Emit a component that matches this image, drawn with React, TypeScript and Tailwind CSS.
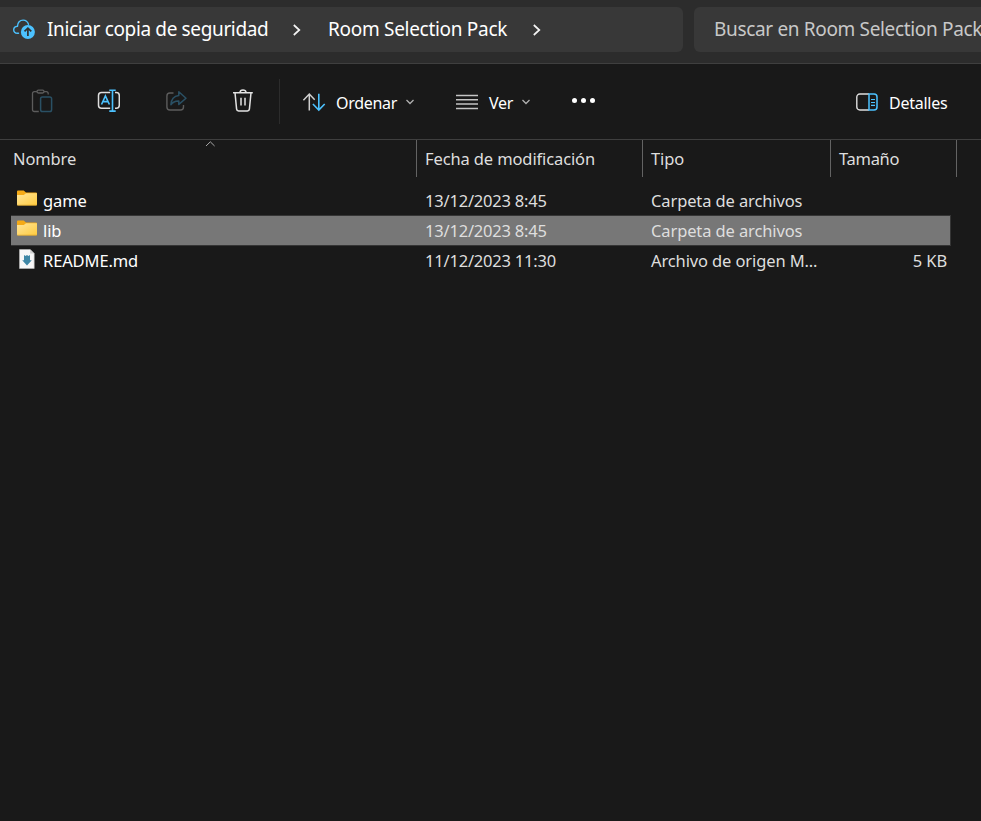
import type { ReactNode } from "react";

function CloudIcon() {
  return (
    <svg width="24" height="22" viewBox="0 0 24 22" fill="none" className="mb-px shrink-0">
      <path d="M6.500 15.300H5.500C3.300 15.200 1.700 13.700 1.700 11.700 1.700 9.700 3.200 8.400 5.500 8.200 5.500 4.600 7.900 2.100 11.100 2.100c2.600 0 4.600 1.600 5.400 4.200" stroke="#4cc2ff" strokeWidth="1.4" strokeLinecap="round" />
      <circle cx="15.900" cy="14" r="7" fill="#4cc2ff" />
      <path d="M15.900 18V10.300M12.500 13.400l3.400-3.300 3.400 3.300" stroke="#303030" strokeWidth="1.7" />
    </svg>
  );
}

function Crumb() {
  return (
    <svg width="8" height="12" viewBox="0 0 8 12" fill="none" className="shrink-0">
      <path d="M.8 1l5.500 5-5.500 5" stroke="#f4f4f4" strokeWidth="1.7" />
    </svg>
  );
}

function PasteIcon() {
  return (
    <svg width="22" height="24" viewBox="0 0 22 24" fill="none">
      <path d="M6 2.700H3.200a1.700 1.700 0 0 0-1.700 1.700v16.400a1.700 1.700 0 0 0 1.700 1.700h4.600M13 2.700h2.500a1.700 1.700 0 0 1 1.700 1.700v1.200" stroke="#5c5c5c" strokeWidth="1.3" />
      <rect x="6" y="1.200" width="7" height="2.800" rx="1.400" stroke="#5c5c5c" strokeWidth="1.3" />
      <rect x="9.600" y="8" width="11" height="14.500" rx="1.800" stroke="#2a5064" strokeWidth="1.5" />
    </svg>
  );
}

function RenameIcon() {
  return (
    <svg width="24" height="24" viewBox="0 0 24 24" fill="none">
      <path d="M14.200 3.500H5.500a3 3 0 0 0-3 3v9.700a3 3 0 0 0 3 3h8.700M19 3.500h1.300a3 3 0 0 1 3 3v9.700a3 3 0 0 1-3 3H19" stroke="#dedede" strokeWidth="1.5" />
      <path d="M5.500 15.500l3.900-8.600 4 8.600M6.900 12.600h5M16.500 1.200v21M13.300 1.300h6.400M13.300 22.100h6.400" stroke="#4cc2ff" strokeWidth="1.600" />
    </svg>
  );
}

function ShareIcon() {
  return (
    <svg width="24" height="24" viewBox="0 0 24 24" fill="none">
      <path d="M9.500 4H5.900a3 3 0 0 0-3 3v11a3 3 0 0 0 3 3H16.500a3 3 0 0 0 3-3v-2" stroke="#5c5c5c" strokeWidth="1.400" />
      <path d="M14.800 2.800l7.200 6.400-7.200 6.200v-3.500c-3.600-.2-6 1.100-7.900 3.800.3-5 3.200-8.600 7.900-9.200z" stroke="#2a5064" strokeWidth="1.500" strokeLinejoin="round" />
    </svg>
  );
}

function TrashIcon() {
  return (
    <svg width="22" height="24" viewBox="0 0 22 24" fill="none">
      <path d="M1 3.700h19.800M8 3.500a3 2.600 0 0 1 6 0M3 3.700l1.600 16.400a2 2 0 0 0 2 1.800h8.800a2 2 0 0 0 2-1.800L19 3.700M9 8.800v7.800M13 8.800v7.800" stroke="#e2e2e2" strokeWidth="1.500" />
    </svg>
  );
}

function SortIcon() {
  return (
    <svg width="24" height="20" viewBox="0 0 24 20" fill="none">
      <path d="M7.300 18.400V2.200M1.400 8.300l5.900-6.200 5.400 5.700" stroke="#cfcfcf" strokeWidth="1.500" />
      <path d="M16.800 1.800v16M10.900 12l5.900 6 5.900-6" stroke="#4cc2ff" strokeWidth="1.600" />
    </svg>
  );
}

function LinesIcon() {
  return (
    <svg width="22" height="16" viewBox="0 0 22 16">
      <path d="M0 1.500h22M0 5.800h22M0 10h22M0 14.500h22" stroke="#c4c4c4" strokeWidth="1.400" />
    </svg>
  );
}

function Chevron() {
  return (
    <svg width="8" height="6" viewBox="0 0 8 6" fill="none" className="mt-px">
      <path d="M.5 1L4 4.500 7.500 1" stroke="#b0b0b0" strokeWidth="1.300" />
    </svg>
  );
}

function DetailsIcon() {
  return (
    <svg width="22" height="18" viewBox="0 0 22 18" fill="none">
      <path d="M13 1H3.800A3 3 0 0 0 .8 4v10a3 3 0 0 0 3 3H13" stroke="#dedede" strokeWidth="1.400" />
      <path d="M13 1h5a3 3 0 0 1 3 3v10a3 3 0 0 1-3 3h-5z" stroke="#4cc2ff" strokeWidth="1.500" />
      <path d="M15 6.500h4M15 9.500h4M15 12.400h4" stroke="#4cc2ff" strokeWidth="1.100" />
    </svg>
  );
}

function FolderIcon() {
  return (
    <svg width="20" height="16" viewBox="0 0 20 16">
      <defs>
        <linearGradient id="folder" x1="0" y1="0" x2="1" y2="1">
          <stop offset="0" stopColor="#ffe59a" />
          <stop offset="1" stopColor="#ffcb3e" />
        </linearGradient>
      </defs>
      <path d="M1 .5h5.700L9 2.400h10a1 1 0 0 1 1 1V13H0V1.500a1 1 0 0 1 1-1z" fill="#f5aa16" />
      <path d="M0 5h6.800L9 3.200h11v11.300a1 1 0 0 1-1 1H1a1 1 0 0 1-1-1z" fill="url(#folder)" />
      <path d="M.3 15.200h19.400" stroke="#d99e22" strokeWidth=".6" />
    </svg>
  );
}

function FileIcon() {
  return (
    <svg width="16" height="20" viewBox="0 0 16 20">
      <path d="M.5.5h10.700l4 4v15H.5z" fill="#f7f7f7" stroke="#bbb" strokeWidth=".6" />
      <path d="M11.200.5v4h4z" fill="#cfcfcf" />
      <path d="M5 6l1.600 1L8 6l1.400 1L11 6v5.200h1.800L8 16.600 3.200 11.200H5z" fill="#3f87a6" />
    </svg>
  );
}

type Row = { name: string; date: string; type: string; size: string; icon: ReactNode; selected?: boolean };

const rows: Row[] = [
  { name: "game", date: "13/12/2023 8:45", type: "Carpeta de archivos", size: "", icon: <FolderIcon /> },
  { name: "lib", date: "13/12/2023 8:45", type: "Carpeta de archivos", size: "", icon: <div className="pb-0.5"><FolderIcon /></div>, selected: true },
  { name: "README.md", date: "11/12/2023 11:30", type: "Archivo de origen M...", size: "5 KB", icon: <div className="pt-0.5"><FileIcon /></div> },
];

export default function App() {
  return (
    <div className="flex h-[821px] w-[981px] flex-col overflow-hidden bg-[#191919] font-['Noto_Sans','Open_Sans',sans-serif] text-[16.5px] whitespace-nowrap text-white">
      <header className="flex h-16 shrink-0 gap-[11px] border-b border-[#3f3f3f] bg-[#2c2c2c] pt-[7px] text-[19px]">
        <div className="flex h-[45px] w-[683px] shrink-0 items-center rounded-r-md bg-[#383838] pl-3">
          <CloudIcon />
          <span className="ml-[11px] w-[246px] tracking-[-0.36px]">Iniciar copia de seguridad</span>
          <Crumb />
          <span className="ml-[27px] w-[205px] tracking-[-0.3px]">Room Selection Pack</span>
          <Crumb />
        </div>
        <div className="flex h-[45px] w-[320px] shrink-0 items-center rounded-l-md bg-[#383838] pl-5 tracking-[-0.34px] text-[#c8c8c8]">
          <span>Buscar en Room Selection Pack</span>
        </div>
      </header>

      <nav className="flex h-[76px] shrink-0 items-center border-b border-[#3f3f3f] text-[16px]">
        <div className="flex w-[279px] items-center pb-px pl-[31px]">
          <div className="w-[65px]"><PasteIcon /></div>
          <div className="w-[68px]"><RenameIcon /></div>
          <div className="w-[68px]"><ShareIcon /></div>
          <TrashIcon />
        </div>
        <div className="h-[45px] w-px bg-[#2c2c2c]" />
        <div className="flex w-[176px] items-center pl-[22px]">
          <SortIcon />
          <span className="ml-[10px] w-[70px] pt-0.5 tracking-[-0.3px]">Ordenar</span>
          <Chevron />
        </div>
        <div className="flex w-[116px] items-center">
          <LinesIcon />
          <span className="ml-[11px] w-[33px] pt-0.5 tracking-[-0.3px]">Ver</span>
          <Chevron />
        </div>
        <div className="mb-[3px] flex gap-1">
          <div className="size-[5px] rounded-full bg-white" />
          <div className="size-[5px] rounded-full bg-white" />
          <div className="size-[5px] rounded-full bg-white" />
        </div>
        <div className="ml-auto flex w-[125px] items-center">
          <DetailsIcon />
          <span className="ml-[11px] pt-0.5 tracking-[-0.25px]">Detalles</span>
        </div>
      </nav>

      <div className="flex h-[37px] shrink-0 tracking-[-0.12px] text-[#dedede]">
        <div className="relative flex w-[417px] items-center border-r border-[#636363] pt-0.5 pl-[13px]">
          <span>Nombre</span>
          <svg width="10" height="6" viewBox="0 0 10 6" fill="none" className="absolute top-px left-[205px]">
            <path d="M1 5L5.300.800l4.300 4.200" stroke="#a8a8a8" />
          </svg>
        </div>
        <div className="flex w-[226px] items-center border-r border-[#636363] pt-0.5 pl-2"><span>Fecha de modificación</span></div>
        <div className="flex w-[188px] items-center border-r border-[#636363] pt-0.5 pl-2"><span>Tipo</span></div>
        <div className="flex w-[126px] items-center border-r border-[#636363] pt-0.5 pl-2 tracking-[-0.3px]"><span>Tamaño</span></div>
      </div>

      <main className="flex flex-col pt-2 pl-[11px] tracking-[-0.12px]">
        {rows.map((row) => (
          <div
            key={row.name}
            className={row.selected
              ? "-mb-px flex h-[31px] w-[940px] items-center border-y border-r border-[#353535] bg-[#777777]"
              : "flex h-[30px] w-[940px] items-center"}
          >
            <div className="flex w-8 justify-center pb-1">{row.icon}</div>
            <span className="w-[382px] pt-0.5">{row.name}</span>
            <span className="w-[226px] pt-0.5 tracking-[-0.2px] text-[#dedede]">{row.date}</span>
            <span className="w-[190px] pt-0.5 text-[#dedede]">{row.type}</span>
            <span className="ml-auto pt-0.5 pr-1 text-[#dedede]">{row.size}</span>
          </div>
        ))}
      </main>
    </div>
  );
}
